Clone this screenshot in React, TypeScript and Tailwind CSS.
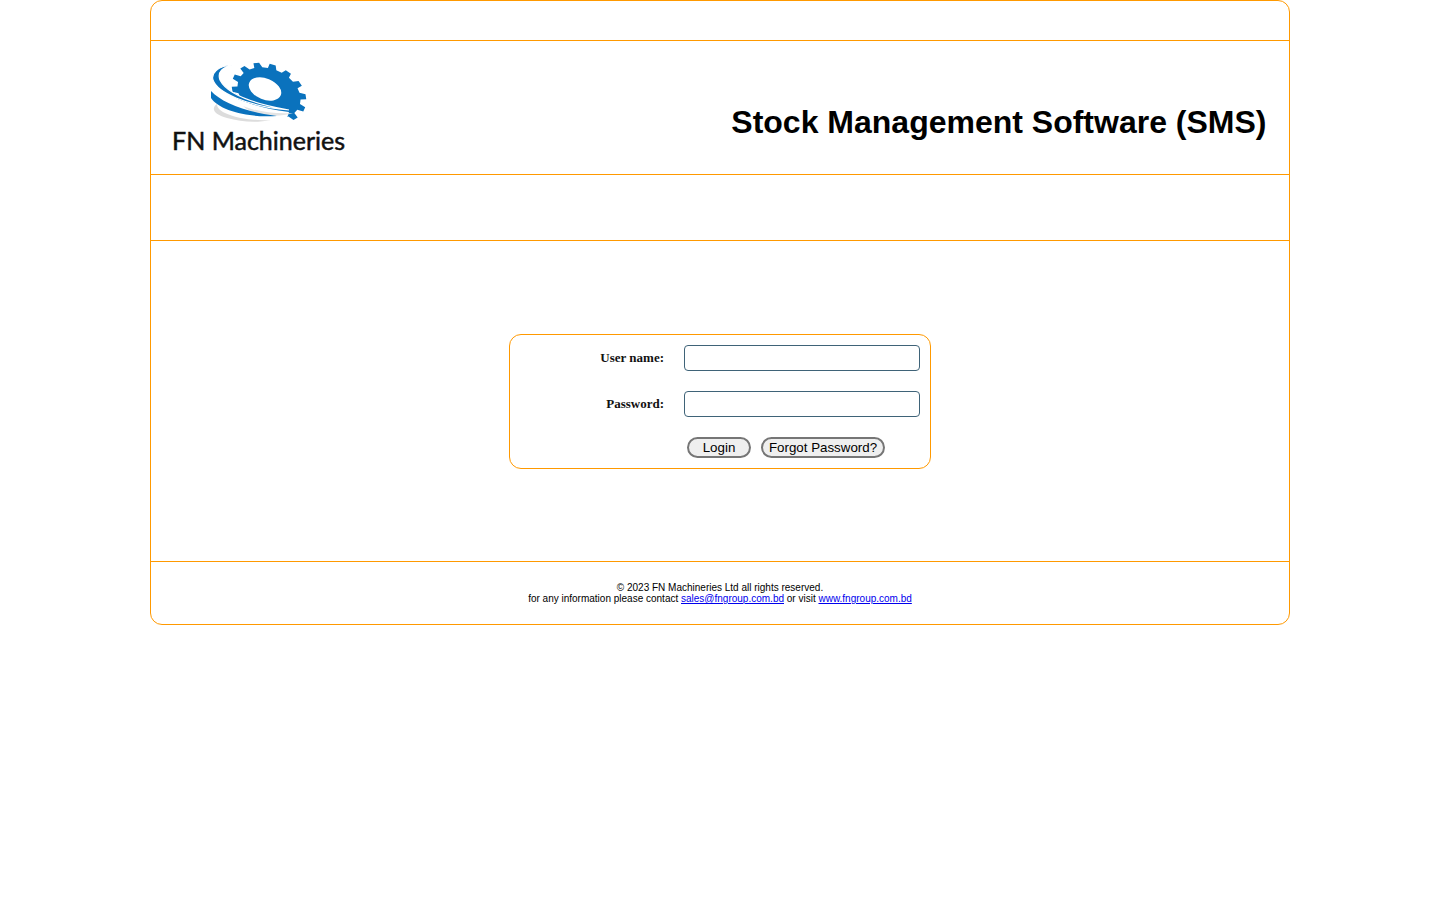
import React from 'react';

// gear outline, drawn round the origin, later squashed and tilted
const gearPath = (() => {
  const teeth = 14;
  const outer = 39;
  const inner = 33;
  const step = (Math.PI * 2) / teeth;
  const pts: string[] = [];
  for (let i = 0; i < teeth; i++) {
    const a = i * step;
    const at = (r: number, t: number) =>
      `${(r * Math.cos(a + t * step)).toFixed(2)} ${(r * Math.sin(a + t * step)).toFixed(2)}`;
    pts.push(at(inner, -0.3), at(outer, -0.18), at(outer, 0.18), at(inner, 0.3));
  }
  return `M${pts.join('L')}Z`;
})();

const Logo = () => (
  <div className="flex flex-col items-start">
    <svg width="110" height="70" viewBox="0 0 110 70" className="mt-[2px] ml-[33px] block blur-[0.4px]">
      <g transform="translate(64 33) rotate(25) scale(1 0.72)">
        <path fill="#0a72bd" d={gearPath} />
      </g>
      <ellipse cx="60" cy="29" rx="17" ry="10.5" transform="rotate(22 60 29)" fill="#fff" />
      <path fill="#fff" d="M8 20C12 32 40 46 84 52L78 70L0 70Z" />
      <path fill="#dcdcdc" d="M12 44C6 48 8 54 22 58C36 62 52 63 66 60C48 61 30 58 20 53C14 50 12 47 12 44Z" />
      <path fill="#e4e4e4" d="M38 46C52 52 72 54 88 53C72 58 48 56 38 46Z" />
      <path fill="#0a72bd" stroke="#fff" strokeWidth="1.2" d="M27 5C12 6 6 14 8 20C12 32 40 46 84 50C50 44 22 34 15 20C12 12 18 7 27 5Z" />
      <path fill="#0a72bd" d="M6 31C16 42 40 52 72 56C42 58 14 50 6 38Z" />
    </svg>
    <span className="-mt-[2px] font-['Lato',sans-serif] text-[25px] leading-[24px] text-[#111] [-webkit-text-stroke:0.5px_#111]">FN Machineries</span>
  </div>
);

export default function App() {
  return (
    <div className="mx-auto w-[1140px] rounded-[12px] border border-[#ff9900] bg-white font-['Liberation_Sans',Arial,sans-serif] text-black">
      <div className="h-[40px] border-b border-[#ff9900]" />

      <div className="flex h-[134px] items-start justify-between border-b border-[#ff9900] pt-[17px] pl-[21px] pr-[22.5px]">
        <Logo />
        <h1 className="mt-[46px] text-[32px] leading-[37px] font-bold">Stock Management Software (SMS)</h1>
      </div>

      <div className="h-[66px] border-b border-[#ff9900]" />

      <div className="flex h-[321px] items-center justify-center border-b border-[#ff9900]">
        <form className="grid w-[422px] grid-cols-[154px_236px] items-center gap-x-[20px] gap-y-[20px] rounded-[12px] border border-[#ff9900] pt-[10px] pb-[10px]">
          <label className="text-right font-['Liberation_Serif',serif] text-[13px] font-bold text-[#111]">User name:</label>
          <input type="text" className="h-[26px] rounded-[4px] border border-[#3f6378] bg-white" />
          <label className="text-right font-['Liberation_Serif',serif] text-[13px] font-bold text-[#111]">Password:</label>
          <input type="password" className="h-[26px] rounded-[4px] border border-[#3f6378] bg-white" />
          <div />
          <div className="ml-[3px] flex gap-[10px]">
            <button type="button" className="h-[21px] w-[64px] rounded-full border-2 border-[#767676] bg-[#efefef] text-[13.33px] leading-[15px]">Login</button>
            <button type="button" className="h-[21px] w-[124px] rounded-full border-2 border-[#767676] bg-[#efefef] text-[13.33px] leading-[15px]">Forgot Password?</button>
          </div>
        </form>
      </div>

      <div className="h-[62px] pt-[20px] text-center text-[10px] leading-[11px]">
        <p>© 2023 FN Machineries Ltd all rights reserved.</p>
        <p>
          for any information please contact{' '}
          <a href="#" className="text-[#0000ee] underline">sales@fngroup.com.bd</a> or visit{' '}
          <a href="#" className="text-[#0000ee] underline">www.fngroup.com.bd</a>
        </p>
      </div>
    </div>
  );
}
